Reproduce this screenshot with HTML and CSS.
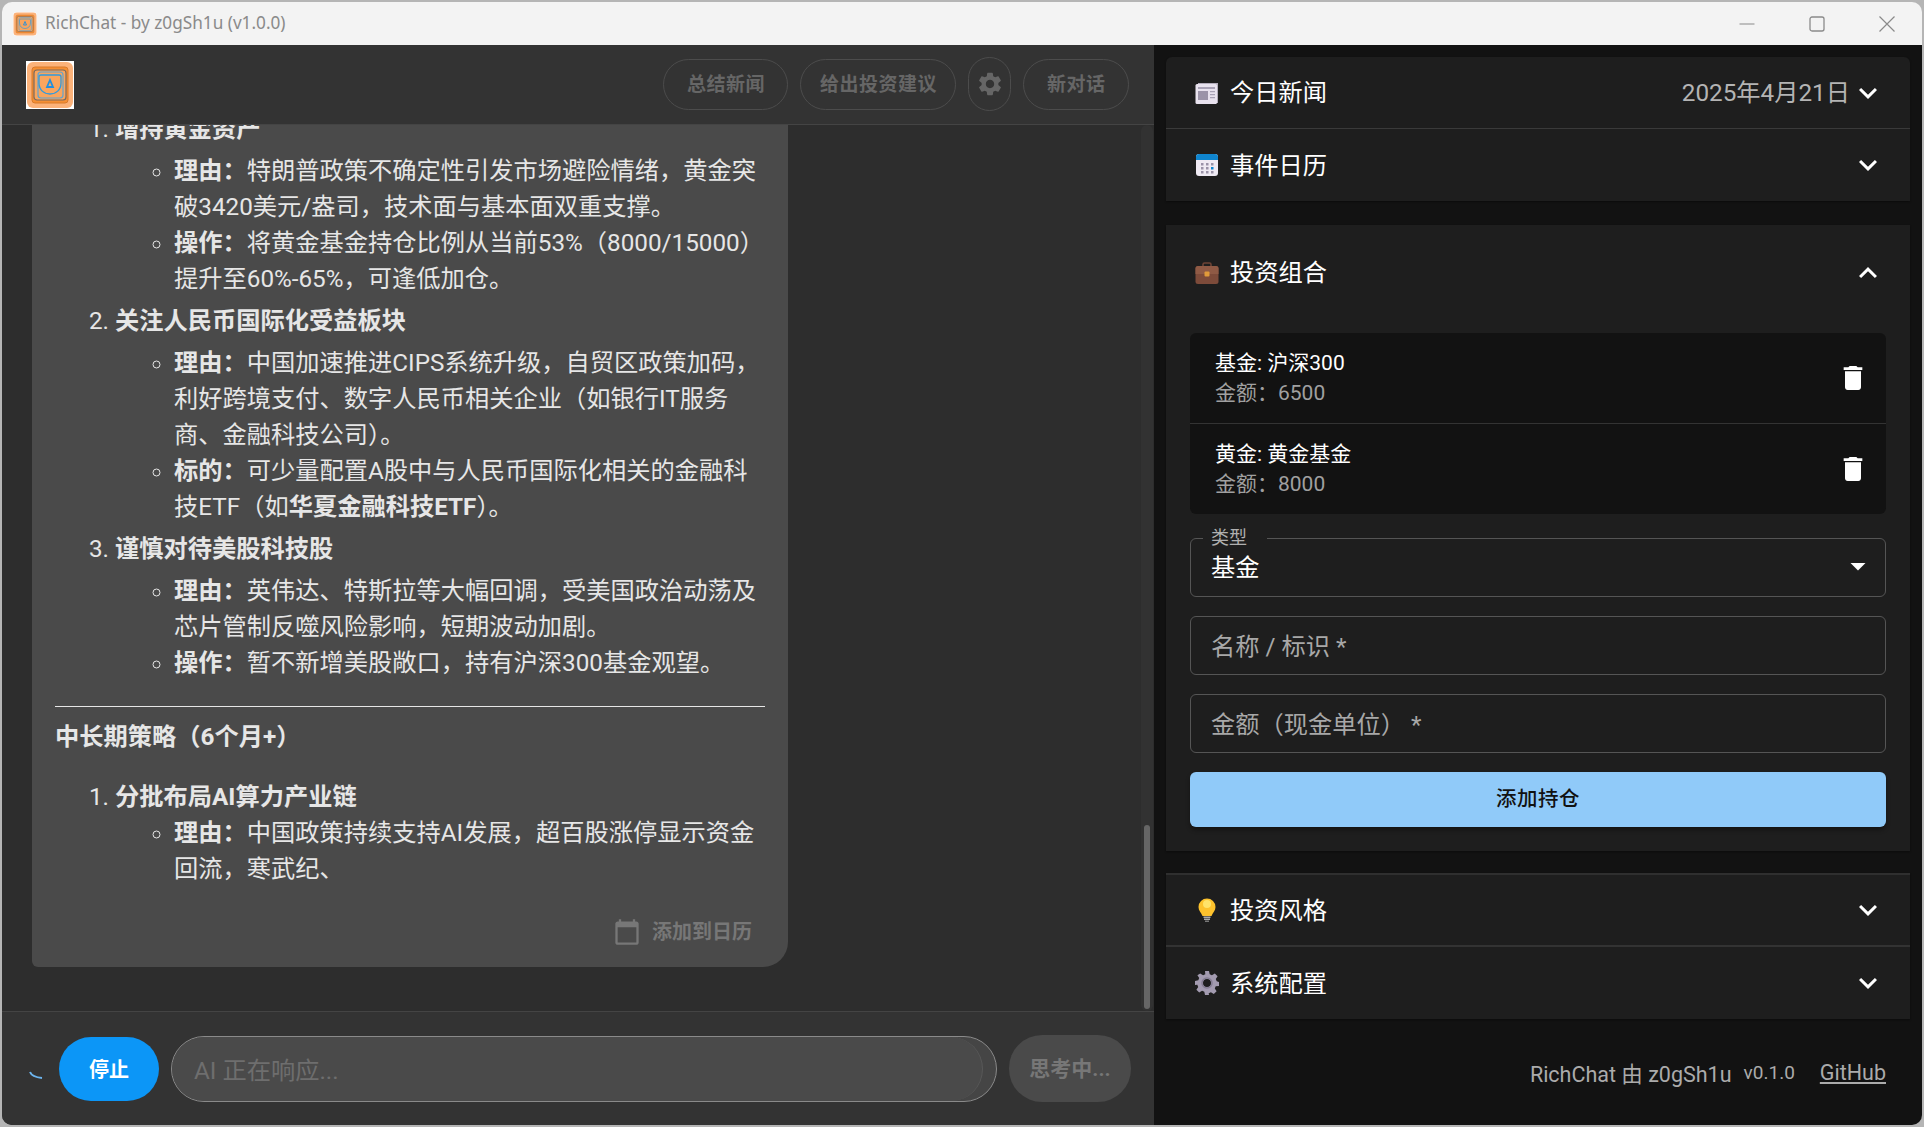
FILE: index.html
```html
<!DOCTYPE html>
<html lang="zh-CN">

<head>
    <meta charset="UTF-8">
    <meta name="viewport" content="width=device-width, initial-scale=1.0">
    <title>RichChat</title>
    <link rel="stylesheet" href="styles.css">
</head>

<body>
    <svg class="defs" width="0" height="0">
        <symbol id="logo" viewBox="0 0 48 48">
            <rect width="48" height="48" fill="#fff"/>
            <rect x="1" y="1" width="46" height="46" rx="6" fill="#fbb27a"/>
            <rect x="6" y="6" width="36" height="36" rx="3" fill="#f58f35" stroke="#d97a2a"/>
            <rect x="8" y="9" width="32" height="30" rx="3" fill="#f9a55e" stroke="#7a6a5e" stroke-width="1.2"/>
            <rect x="12" y="11" width="25" height="26" rx="3" fill="none" stroke="#5fa3d0" stroke-width="1.2"/>
            <path d="M15 14h18c1 0 2 1 2 2v6c0 7-5 11-11 11s-11-4-11-11v-6c0-1 1-2 2-2z" fill="none" stroke="#2f9be0" stroke-width="1.3"/>
            <path d="M24 19l3 7h-6z" fill="none" stroke="#1f8fe0" stroke-width="1.8"/>
        </symbol>
        <symbol id="chevron" viewBox="0 0 24 24">
            <path d="M16.59 8.59 12 13.17 7.41 8.59 6 10l6 6 6-6z"/>
        </symbol>
        <symbol id="trash" viewBox="0 0 24 24">
            <path d="M6 19c0 1.1.9 2 2 2h8c1.1 0 2-.9 2-2V7H6v12zM19 4h-3.5l-1-1h-5l-1 1H5v2h14V4z"/>
        </symbol>
    </svg>

    <div class="window">
        <div class="titlebar">
            <svg class="title-icon"><use href="#logo"/></svg>
            <span class="title-text">RichChat - by z0gSh1u (v1.0.0)</span>
            <div class="controls">
                <div class="control">
                    <svg width="16" height="16" viewBox="0 0 16 16"><path d="M0.5 8h15" stroke="#8a8a8a" stroke-width="1.2"/></svg>
                </div>
                <div class="control">
                    <svg width="16" height="16" viewBox="0 0 16 16"><rect x="1" y="1" width="14" height="14" rx="2" fill="none" stroke="#8a8a8a" stroke-width="1.3"/></svg>
                </div>
                <div class="control">
                    <svg width="16" height="16" viewBox="0 0 16 16"><path d="M0.5 0.5l15 15M15.5 0.5l-15 15" stroke="#8a8a8a" stroke-width="1.2"/></svg>
                </div>
            </div>
        </div>

        <div class="main">
            <section class="chat">
                <header class="chat-header">
                    <svg class="logo"><use href="#logo"/></svg>
                    <div class="chat-actions">
                        <button class="pill" type="button">总结新闻</button>
                        <button class="pill pill-tight" type="button">给出投资建议</button>
                        <button class="pill pill-gear" type="button">
                            <svg width="28" height="28" viewBox="0 0 24 24"><path fill="#666" d="M19.14 12.94c.04-.3.06-.61.06-.94 0-.32-.02-.64-.07-.94l2.03-1.58c.18-.14.23-.41.12-.61l-1.92-3.32c-.12-.22-.37-.29-.59-.22l-2.39.96c-.5-.38-1.03-.7-1.62-.94l-.36-2.54c-.04-.24-.24-.41-.48-.41h-3.84c-.24 0-.43.17-.47.41l-.36 2.54c-.59.24-1.13.57-1.62.94l-2.39-.96c-.22-.08-.47 0-.59.22L2.74 8.87c-.12.21-.08.47.12.61l2.03 1.58c-.05.3-.09.63-.09.94s.02.64.07.94l-2.03 1.58c-.18.14-.23.41-.12.61l1.92 3.32c.12.22.37.29.59.22l2.39-.96c.5.38 1.03.7 1.62.94l.36 2.54c.05.24.24.41.48.41h3.84c.24 0 .44-.17.47-.41l.36-2.54c.59-.24 1.13-.56 1.62-.94l2.39.96c.22.08.47 0 .59-.22l1.92-3.32c.12-.22.07-.47-.12-.61l-2.01-1.58zM12 15.6c-1.98 0-3.6-1.62-3.6-3.6s1.62-3.6 3.6-3.6 3.6 1.62 3.6 3.6-1.62 3.6-3.6 3.6z"/></svg>
                        </button>
                        <button class="pill" type="button">新对话</button>
                    </div>
                </header>

                <div class="messages">
                    <div class="bubble">
                        <ol class="steps">
                            <li><strong>增持黄金资产</strong>
                                <ul>
                                    <li><strong>理由&#xFF1A;</strong>特朗普政策不确定性引发市场避险情绪&#xFF0C;黄金突破3420美元/盎司&#xFF0C;技术面与基本面双重支撑。</li>
                                    <li><strong>操作&#xFF1A;</strong>将黄金基金持仓比例从当前53%&#xFF08;8000/15000&#xFF09;提升至60%-65%&#xFF0C;可逢低加仓。</li>
                                </ul>
                            </li>
                            <li><strong>关注人民币国际化受益板块</strong>
                                <ul>
                                    <li><strong>理由&#xFF1A;</strong>中国加速推进CIPS系统升级&#xFF0C;自贸区政策加码&#xFF0C;利好跨境支付、数字人民币相关企业&#xFF08;如银行IT服务商、金融科技公司&#xFF09;。</li>
                                    <li><strong>标的&#xFF1A;</strong>可少量配置A股中与人民币国际化相关的金融科技ETF&#xFF08;如<strong>华夏金融科技ETF</strong>&#xFF09;。</li>
                                </ul>
                            </li>
                            <li><strong>谨慎对待美股科技股</strong>
                                <ul>
                                    <li><strong>理由&#xFF1A;</strong>英伟达、特斯拉等大幅回调&#xFF0C;受美国政治动荡及芯片管制反噬风险影响&#xFF0C;短期波动加剧。</li>
                                    <li><strong>操作&#xFF1A;</strong>暂不新增美股敞口&#xFF0C;持有沪深300基金观望。</li>
                                </ul>
                            </li>
                        </ol>
                        <hr class="rule">
                        <p class="section-title">中长期策略&#xFF08;6个月+&#xFF09;</p>
                        <ol class="steps steps-last">
                            <li><strong>分批布局AI算力产业链</strong>
                                <ul>
                                    <li><strong>理由&#xFF1A;</strong>中国政策持续支持AI发展&#xFF0C;超百股涨停显示资金回流&#xFF0C;寒武纪、</li>
                                </ul>
                            </li>
                        </ol>
                        <div class="bubble-foot">
                            <svg width="28" height="28" viewBox="0 0 24 24"><path fill="#777" d="M20 3h-1V1h-2v2H7V1H5v2H4c-1.1 0-2 .9-2 2v16c0 1.1.9 2 2 2h16c1.1 0 2-.9 2-2V5c0-1.1-.9-2-2-2zm0 18H4V8h16v13z"/></svg>
                            <span>添加到日历</span>
                        </div>
                    </div>
                    <div class="scrollbar"><div class="scrollbar-thumb"></div></div>
                </div>

                <div class="composer">
                    <svg class="spinner" width="24" height="24" viewBox="0 0 24 24"><path d="M4 15Q6 20 16 21" fill="none" stroke="#6cb4ee" stroke-width="2"/></svg>
                    <button class="stop" type="button">停止</button>
                    <div class="prompt">
                        <div class="prompt-inner">AI 正在响应...</div>
                    </div>
                    <button class="send" type="button">思考中...</button>
                </div>
            </section>

            <aside class="side">
                <div class="panel panel-top">
                    <div class="panel-row panel-row-line">
                        <svg class="emoji" viewBox="0 0 24 24">
                            <path d="M3 2h20v20H3z" fill="#b3adbb"/>
                            <rect x="0.5" y="3" width="21.5" height="20" rx="1.5" fill="#e8e2ee"/>
                            <path d="M3 6h17v2H3z" fill="#a9a2b6"/>
                            <rect x="3" y="10" width="10" height="9" fill="#9b93a8"/>
                            <path d="M15 10h5v1.3h-5zM15 13h5v1.3h-5zM15 16h5v1.3h-5z" fill="#a9a2b6"/>
                        </svg>
                        <span class="panel-title">今日新闻</span>
                        <span class="panel-date">2025年4月21日</span>
                        <svg class="chevron"><use href="#chevron"/></svg>
                    </div>
                    <div class="panel-row">
                        <svg class="emoji" viewBox="0 0 24 24">
                            <rect x="1" y="1" width="22" height="22" rx="3" fill="#efeaf3"/>
                            <path d="M1 7V4a3 3 0 0 1 3-3h16a3 3 0 0 1 3 3v3z" fill="#0f85cf"/>
                            <path d="M6 10h2.5v2.5H6zM11 10h2.5v2.5H11zM16 10h2.5v2.5H16zM6 14h2.5v2.5H6zM11 14h2.5v2.5H11zM6 18h2.5v2.5H6zM11 18h2.5v2.5H11zM16 18h2.5v2.5H16z" fill="#9b93a8"/>
                            <path d="M16 14h2.5v2.5H16z" fill="#0f85cf"/>
                        </svg>
                        <span class="panel-title">事件日历</span>
                        <svg class="chevron"><use href="#chevron"/></svg>
                    </div>
                </div>

                <div class="panel panel-open">
                    <div class="panel-row panel-row-tall">
                        <svg class="emoji" viewBox="0 0 24 24">
                            <path d="M8 6V3.5A1.5 1.5 0 0 1 9.5 2h5A1.5 1.5 0 0 1 16 3.500V6" fill="none" stroke="#6d4436" stroke-width="1.6"/>
                            <rect x="0.500" y="5" width="23" height="18" rx="2.500" fill="#7d4b3a"/>
                            <path d="M0.500 7.500a2.500 2.500 0 0 1 2.500-2.500h18a2.500 2.500 0 0 1 2.500 2.500v5.500h-23z" fill="#8f5a45"/>
                            <rect x="9.500" y="10.500" width="5" height="5" rx="1" fill="#e09a3a"/>
                        </svg>
                        <span class="panel-title">投资组合</span>
                        <svg class="chevron chevron-up"><use href="#chevron"/></svg>
                    </div>
                    <div class="panel-body">
                        <div class="holdings">
                            <div class="holding">
                                <div>
                                    <div class="holding-name">基金: 沪深300</div>
                                    <div class="holding-amount">金额&#xFF1A;6500</div>
                                </div>
                                <svg class="trash"><use href="#trash"/></svg>
                            </div>
                            <div class="holding">
                                <div>
                                    <div class="holding-name">黄金: 黄金基金</div>
                                    <div class="holding-amount">金额&#xFF1A;8000</div>
                                </div>
                                <svg class="trash"><use href="#trash"/></svg>
                            </div>
                        </div>
                        <fieldset class="select">
                            <legend>类型</legend>
                            <span class="select-value">基金</span>
                            <svg class="select-arrow" viewBox="0 0 24 24"><path d="M7 10l5 5 5-5z"/></svg>
                        </fieldset>
                        <div class="field">名称 / 标识 *</div>
                        <div class="field">金额&#xFF08;现金单位&#xFF09; *</div>
                        <button class="add" type="button">添加持仓</button>
                    </div>
                </div>

                <div class="panel panel-bottom">
                    <div class="panel-row panel-row-short">
                        <svg class="emoji" viewBox="0 0 24 24">
                            <path d="M12 0.500a8.500 8.500 0 0 0-8.500 8.500c0 3.500 2.500 5.500 4 9h9c1.500-3.500 4-5.500 4-9A8.500 8.500 0 0 0 12 0.500z" fill="#fdc22d"/>
                            <circle cx="12" cy="6" r="4" fill="#ffe36a"/>
                            <path d="M8.500 18.500h7v1.500h-7zM9 20.500h6V22h-6z" fill="#a8a8a8"/>
                            <path d="M10 22.500h4V24h-4z" fill="#777"/>
                        </svg>
                        <span class="panel-title">投资风格</span>
                        <svg class="chevron"><use href="#chevron"/></svg>
                    </div>
                    <div class="panel-row panel-row-split">
                        <svg class="emoji" viewBox="0 0 24 24">
                            <path fill="#a39bb0" fill-rule="evenodd" d="M10 0h4l.7 3.300 2.200.9L19.800 2.400l2.800 2.800-1.800 2.900.9 2.200L24 11v4l-3.300.2-.9 2.200 1.800 2.900-2.800 2.800-2.900-1.800-2.200.9L14 24h-4l-.7-3.300-2.200-.9-2.900 1.800-2.800-2.800 1.800-2.900-.9-2.200L0 14v-4l3.300-.7.9-2.200L2.400 4.200l2.800-1.800 2.900 1.800 2.200-.9zM12 8a4 4 0 1 0 0 8 4 4 0 0 0 0-8z"/>
                            <circle cx="12" cy="12" r="5" fill="none" stroke="#857d93" stroke-width="1.500"/>
                        </svg>
                        <span class="panel-title">系统配置</span>
                        <svg class="chevron"><use href="#chevron"/></svg>
                    </div>
                </div>

                <footer class="side-foot">
                    <span>RichChat 由 z0gSh1u</span>
                    <span class="version">v0.1.0</span>
                    <a class="github" href="#">GitHub</a>
                </footer>
            </aside>
        </div>
    </div>
</body>

</html>
```

FILE: styles.css
```css
* {
    box-sizing: border-box;
}

html,
body {
    height: 100%;
}

body {
    margin: 0;
    padding: 2px;
    overflow: hidden;
    background-color: #b5b5b5;
    font-family: Roboto, "Noto Sans CJK SC", sans-serif;
}

.defs {
    position: absolute;
}

.window {
    display: flex;
    flex-direction: column;
    height: 100%;
    border-radius: 10px;
    overflow: hidden;
}

.titlebar {
    display: flex;
    align-items: center;
    height: 43px;
    padding-left: 11px;
    background-color: #f3f3f3;
}

.title-icon {
    width: 24px;
    height: 24px;
    border-radius: 4px;
}

.title-text {
    margin-left: 8px;
    padding-bottom: 2px;
    color: #8a8a8a;
    font-family: "Noto Sans", sans-serif;
    font-size: 17.2px;
}

.controls {
    display: flex;
    margin-left: auto;
}

.control {
    display: flex;
    justify-content: center;
    align-items: center;
    width: 70px;
    height: 43px;
}

.main {
    display: flex;
    flex: 1;
    min-height: 0;
}

/* left side */
.chat {
    display: flex;
    flex-direction: column;
    width: 1152px;
    background-color: #2d2d2d;
}

.chat-header {
    display: flex;
    align-items: center;
    justify-content: space-between;
    height: 80px;
    padding: 0 25px 0 24px;
    background-color: #333;
    border-bottom: 1px solid #444;
}

.logo {
    width: 48px;
    height: 48px;
}

.chat-actions {
    display: flex;
    align-items: center;
    gap: 12px;
    margin-top: -1px;
}

.pill {
    height: 51px;
    padding: 0 22.5px 3px;
    background: transparent;
    border: 1px solid #4c4c4c;
    border-radius: 26px;
    color: #666;
    font-family: inherit;
    font-size: 19px;
    font-weight: 700;
    letter-spacing: 0.5px;
}

.pill-tight {
    padding: 0 18.5px 3px;
}

.pill-gear {
    display: flex;
    justify-content: center;
    align-items: center;
    width: 43px;
    height: 54px;
    padding: 0;
}

.messages {
    position: relative;
    display: flex;
    flex-direction: column;
    justify-content: flex-end;
    flex: 1;
    min-height: 0;
    padding: 0 0 44px 30px;
    overflow: hidden;
}

.bubble {
    flex-shrink: 0;
    width: 756px;
    padding: 0 23px 11px;
    background-color: #4a4a4a;
    border-radius: 6px 6px 25px 6px;
    color: #e6e6e6;
    font-size: 24.25px;
    line-height: 36px;
}

.bubble strong {
    font-weight: 700;
}

.steps {
    margin: 0;
    padding-left: 60px;
}

.steps > li + li {
    margin-top: 6px;
}

.steps ul {
    margin: 6px 0 0;
    padding-left: 59px;
    list-style: circle;
}

.steps-last ul {
    margin-top: 0;
}

.rule {
    height: 1px;
    margin: 25px 0 12px;
    background-color: #e6e6e6;
    border: 0;
}

.section-title {
    margin: 0 0 24px;
    font-weight: 700;
}

.bubble-foot {
    display: flex;
    align-items: center;
    justify-content: flex-end;
    gap: 11px;
    height: 48px;
    margin-top: 21px;
    padding-right: 13px;
    color: #777;
    font-size: 20px;
    font-weight: 700;
}

.scrollbar {
    position: absolute;
    top: 0;
    right: 1px;
    bottom: 0;
    width: 12px;
    background-color: #323232;
    border-radius: 6px;
}

.scrollbar-thumb {
    position: absolute;
    bottom: 2px;
    left: 3px;
    width: 6px;
    height: 184px;
    background-color: #666;
    border-radius: 3px;
}

.composer {
    display: flex;
    align-items: center;
    gap: 12px;
    flex: none;
    height: 114px;
    padding-left: 24px;
    background-color: #333;
    border-top: 1px solid #444;
}

.spinner {
    margin-right: -3px;
}

.stop {
    width: 100px;
    height: 64px;
    background-color: #0c96f7;
    border: 0;
    border-radius: 32px;
    color: #fff;
    font-family: inherit;
    font-size: 20px;
    font-weight: 700;
}

.prompt {
    width: 826px;
    height: 66px;
    background-color: #454545;
    border: 1px solid #8a8a8a;
    border-radius: 33px;
    overflow: hidden;
}

.prompt-inner {
    display: flex;
    align-items: center;
    width: 811px;
    height: 100%;
    padding-left: 22px;
    background-color: #4a4a4a;
    border-right: 1px solid #585858;
    border-radius: 33px;
    color: #6e6e6e;
    font-size: 24.25px;
}

.send {
    width: 122px;
    height: 67px;
    padding: 0 0 4px;
    background-color: #4a4a4a;
    border: 0;
    border-radius: 33px;
    color: #777;
    font-family: inherit;
    font-size: 21px;
    font-weight: 700;
}

/* right side */
.side {
    display: flex;
    flex-direction: column;
    flex: 1;
    padding: 12px 12px 0;
    background-color: #121212;
}

.panel {
    background-color: #1e1e1e;
    color: #fff;
    box-shadow: 0 1px 2px rgba(0, 0, 0, 0.4);
}

.panel-top {
    border-radius: 6px 6px 0 0;
}

.panel-open {
    margin-top: 24px;
}

.panel-bottom {
    margin-top: 22px;
    border-top: 2px solid #2f2f2f;
}

.panel-row {
    display: flex;
    align-items: center;
    height: 72px;
    padding: 0 24px 0 29px;
}

.panel-row-line {
    border-bottom: 1px solid #3a3a3a;
}

.panel-row-tall {
    height: 95px;
}

.panel-row-short {
    height: 70px;
}

.panel-row-split {
    height: 74px;
    border-top: 2px solid #333;
}

.emoji {
    flex: none;
    width: 24px;
    height: 24px;
}

.panel-title {
    margin-left: 11px;
    padding-bottom: 4px;
    font-size: 24.25px;
}

.panel-date {
    margin-left: auto;
    margin-right: 0;
    padding-bottom: 4px;
    color: #b4b4b4;
    font-size: 24.25px;
}

.chevron {
    flex: none;
    width: 36px;
    height: 36px;
    margin-left: auto;
    fill: #fff;
}

.panel-date + .chevron {
    margin-left: 0;
}

.chevron-up {
    transform: rotate(180deg);
}

.panel-body {
    display: flex;
    flex-direction: column;
    padding: 13px 24px 24px;
}

.holdings {
    background-color: #121212;
    border-radius: 6px;
}

.holding {
    display: flex;
    justify-content: space-between;
    align-items: center;
    height: 90px;
    padding: 0 17px 0 25px;
    line-height: 30px;
}

.holding + .holding {
    height: 91px;
    border-top: 1px solid #333;
}

.holding-name {
    font-size: 21px;
}

.holding-amount {
    color: #a0a0a0;
    font-size: 21px;
}

.trash {
    width: 32px;
    height: 32px;
    fill: #fff;
}

.select {
    display: flex;
    justify-content: space-between;
    align-items: flex-start;
    height: 69px;
    min-width: 0;
    margin: 14px 0 0;
    padding: 0 9px 0 20px;
    border: 1px solid #555;
    border-radius: 6px;
}

.select legend {
    height: 20px;
    margin-left: -8px;
    padding: 0 20px 0 8px;
    color: #b0b0b0;
    font-size: 18px;
    line-height: 20px;
}

.select-value {
    margin-top: 2px;
    font-size: 24.25px;
    line-height: 36px;
}

.select-arrow {
    width: 36px;
    height: 36px;
    fill: #fff;
}

.field {
    display: flex;
    align-items: center;
    height: 59px;
    margin-top: 19px;
    padding: 0 0 2px 20px;
    border: 1px solid #555;
    border-radius: 6px;
    color: #a8a8a8;
    font-size: 24.25px;
}

.add {
    height: 55px;
    margin-top: 19px;
    padding-bottom: 7px;
    background-color: #90caf9;
    border: 0;
    border-radius: 6px;
    box-shadow: 0 3px 4px rgba(0, 0, 0, 0.35);
    color: #121212;
    font-family: inherit;
    font-size: 20.5px;
    font-weight: 500;
    letter-spacing: 0.5px;
}

.side-foot {
    display: flex;
    justify-content: flex-end;
    align-items: center;
    flex: 1;
    padding-right: 24px;
    color: #ababab;
    font-size: 21.5px;
}

.version {
    margin-left: 12px;
    font-size: 19px;
}

.github {
    margin-left: 25px;
    color: #ababab;
}
```
